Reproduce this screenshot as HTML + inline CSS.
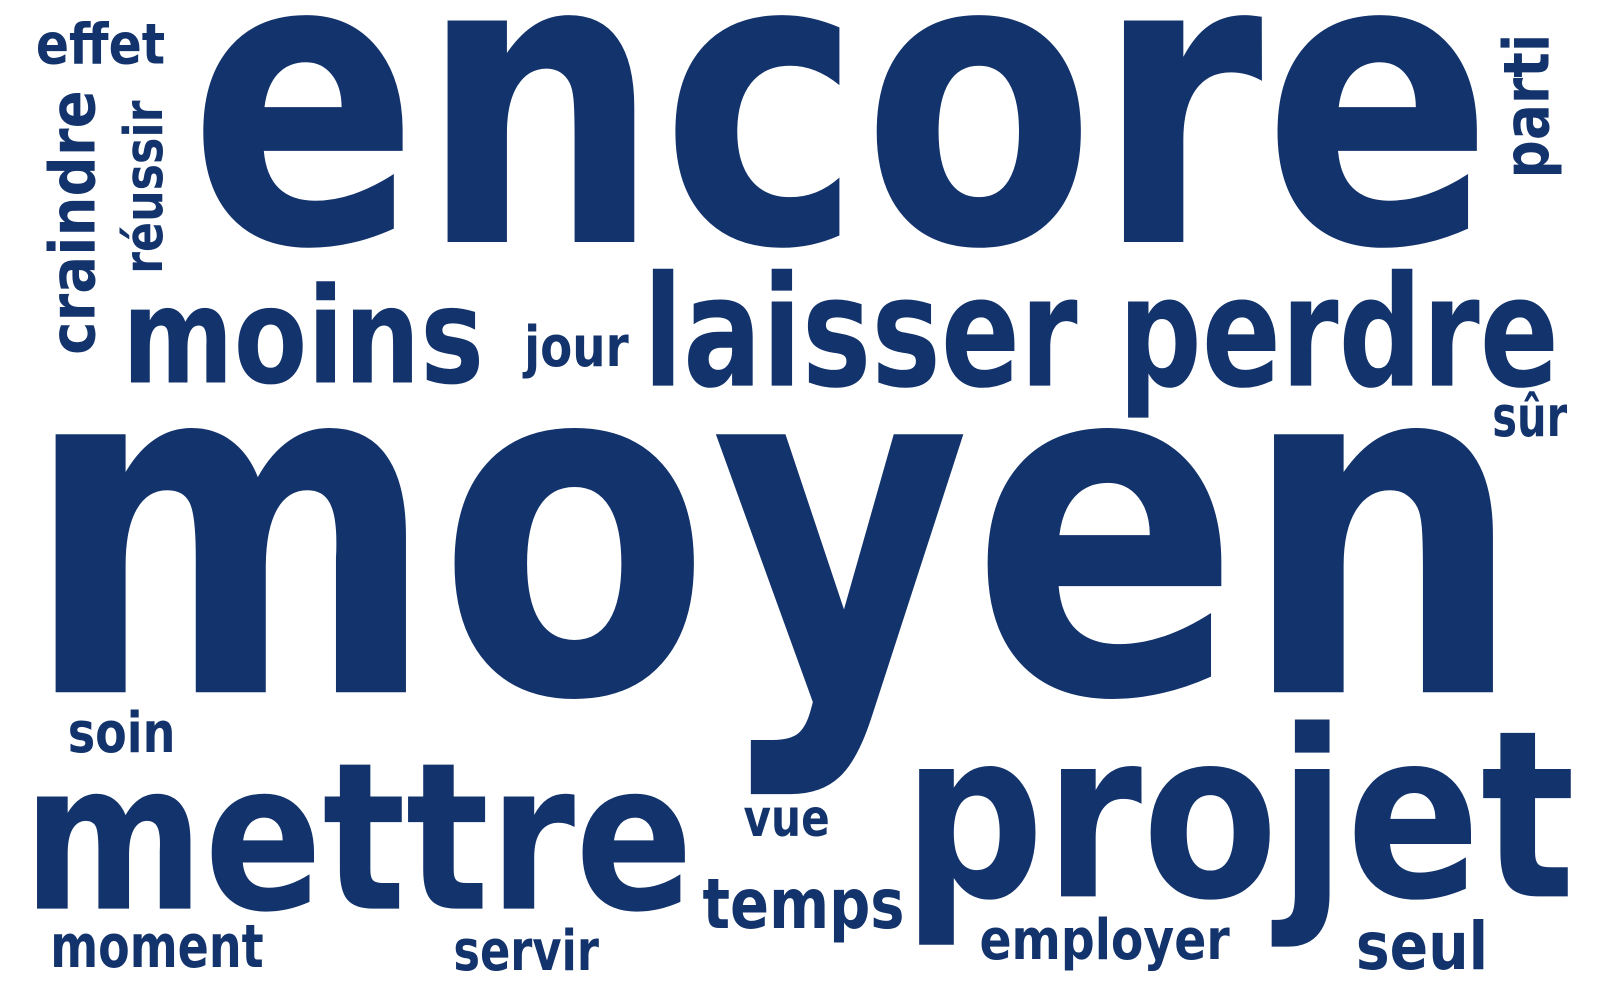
<!DOCTYPE html>
<html><head><meta charset="utf-8"><style>
html,body{margin:0;padding:0;background:#fff;}
svg{display:block;}
text{font-family:"DejaVu Sans","Liberation Sans",sans-serif;font-weight:bold;fill:#13336c;}
</style></head><body>
<svg width="1600" height="1000" viewBox="0 0 1600 1000" xmlns="http://www.w3.org/2000/svg">
<g transform="scale(1.0256)">
<text x="184" y="236" font-size="395" textLength="1272" lengthAdjust="spacingAndGlyphs">encore</text>
<text x="22" y="675" font-size="460" textLength="1464" lengthAdjust="spacingAndGlyphs">moyen</text>
<text x="880" y="874" font-size="227" textLength="656" lengthAdjust="spacingAndGlyphs">projet</text>
<text x="22" y="886" font-size="200" textLength="654" lengthAdjust="spacingAndGlyphs">mettre</text>
<text x="627" y="376" font-size="150" textLength="893" lengthAdjust="spacingAndGlyphs">laisser perdre</text>
<text x="119" y="373" font-size="130" textLength="353" lengthAdjust="spacingAndGlyphs">moins</text>
<text x="511" y="357" font-size="55" textLength="102" lengthAdjust="spacingAndGlyphs">jour</text>
<text x="35" y="62" font-size="55" textLength="126" lengthAdjust="spacingAndGlyphs">effet</text>
<text transform="translate(92,346) rotate(-90)" font-size="62" textLength="258" lengthAdjust="spacingAndGlyphs">craindre</text>
<text transform="translate(158,267) rotate(-90)" font-size="52" textLength="169" lengthAdjust="spacingAndGlyphs">réussir</text>
<text transform="translate(1510,174) rotate(-90)" font-size="62" textLength="141" lengthAdjust="spacingAndGlyphs">parti</text>
<text x="1455" y="425" font-size="55" textLength="73" lengthAdjust="spacingAndGlyphs">sûr</text>
<text x="66" y="733" font-size="55" textLength="105" lengthAdjust="spacingAndGlyphs">soin</text>
<text x="725" y="815" font-size="50" textLength="84" lengthAdjust="spacingAndGlyphs">vue</text>
<text x="685" y="905" font-size="68" textLength="197" lengthAdjust="spacingAndGlyphs">temps</text>
<text x="955" y="935" font-size="55" textLength="244" lengthAdjust="spacingAndGlyphs">employer</text>
<text x="1322" y="945" font-size="64" textLength="129" lengthAdjust="spacingAndGlyphs">seul</text>
<text x="49" y="943" font-size="58" textLength="208" lengthAdjust="spacingAndGlyphs">moment</text>
<text x="442" y="946" font-size="55" textLength="142" lengthAdjust="spacingAndGlyphs">servir</text>
</g>
</svg>
</body></html>
